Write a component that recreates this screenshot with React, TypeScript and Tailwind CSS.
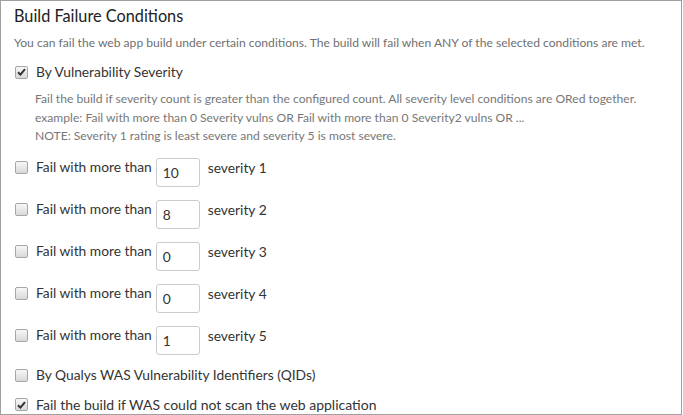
import React from 'react';

const severityRows = [
  { value: '10', level: 1 },
  { value: '8', level: 2 },
  { value: '0', level: 3 },
  { value: '0', level: 4 },
  { value: '1', level: 5 },
];

function Checkbox({ checked = false }: { checked?: boolean }) {
  return (
    <span className="flex h-[13px] w-[13px] shrink-0 items-center justify-center rounded-[2px] border border-[#a6a6a6] bg-gradient-to-b from-[#f7f7f7] to-[#d9d9d9]">
      {checked && (
        <svg width="9" height="8" viewBox="0 0 9 8">
          <path d="M1 4.2 L3.4 6.6 L8 1.2" fill="none" stroke="#333" strokeWidth="2" />
        </svg>
      )}
    </span>
  );
}

export default function App() {
  return (
    <div className="h-[415px] w-[683px] bg-white font-['Lato','Liberation_Sans',sans-serif]">
      <div className="box-border h-[415px] w-[682px] border border-[#a0a0a0] px-[13px] pt-[4px]">
        <h2 className="h-[22px] text-[16.3px] leading-[22px] text-[#222]">Build Failure Conditions</h2>

        <p className="mt-[7px] h-[18px] text-[12.1px] leading-[18px] text-[#707070]">
          You can fail the web app build under certain conditions. The build will fail when ANY of the selected conditions are met.
        </p>

        <label className="mt-[11px] flex h-[18px] items-center gap-[8px] pl-px text-[13.8px] text-[#333]">
          <Checkbox checked />
          By Vulnerability Severity
        </label>

        <div className="mt-[9px] pl-[21px] text-[12.1px] leading-[18.5px] text-[#777]">
          <p>Fail the build if severity count is greater than the configured count. All severity level conditions are ORed together.</p>
          <p>example: Fail with more than 0 Severity vulns OR Fail with more than 0 Severity2 vulns OR ...</p>
          <p>NOTE: Severity 1 rating is least severe and severity 5 is most severe.</p>
        </div>

        <div className="mt-[12px] flex flex-col gap-[13px]">
          {severityRows.map((row) => (
            <div key={row.level} className="flex h-[29px] items-start text-[13.8px] text-[#333]">
              <span className="mt-[1px] flex h-[18px] items-center gap-[8px] pl-px">
                <Checkbox />
                Fail with more than
              </span>
              <span className="ml-[4px] box-border flex h-[29px] w-[44px] items-end rounded-[3px] border border-[#cccccc] pb-[4px] pl-[6px] text-[13.8px] leading-[18px] text-[#333]">
                {row.value}
              </span>
              <span className="ml-[8px] mt-[1px] h-[18px] leading-[18px]">severity {row.level}</span>
            </div>
          ))}
        </div>

        <label className="mt-[12px] flex h-[18px] items-center gap-[8px] pl-px text-[13.8px] text-[#333]">
          <Checkbox />
          By Qualys WAS Vulnerability Identifiers (QIDs)
        </label>

        <label className="mt-[11px] flex h-[18px] items-center gap-[8px] pl-px text-[14px] text-[#333]">
          <Checkbox checked />
          Fail the build if WAS could not scan the web application
        </label>
      </div>
    </div>
  );
}
